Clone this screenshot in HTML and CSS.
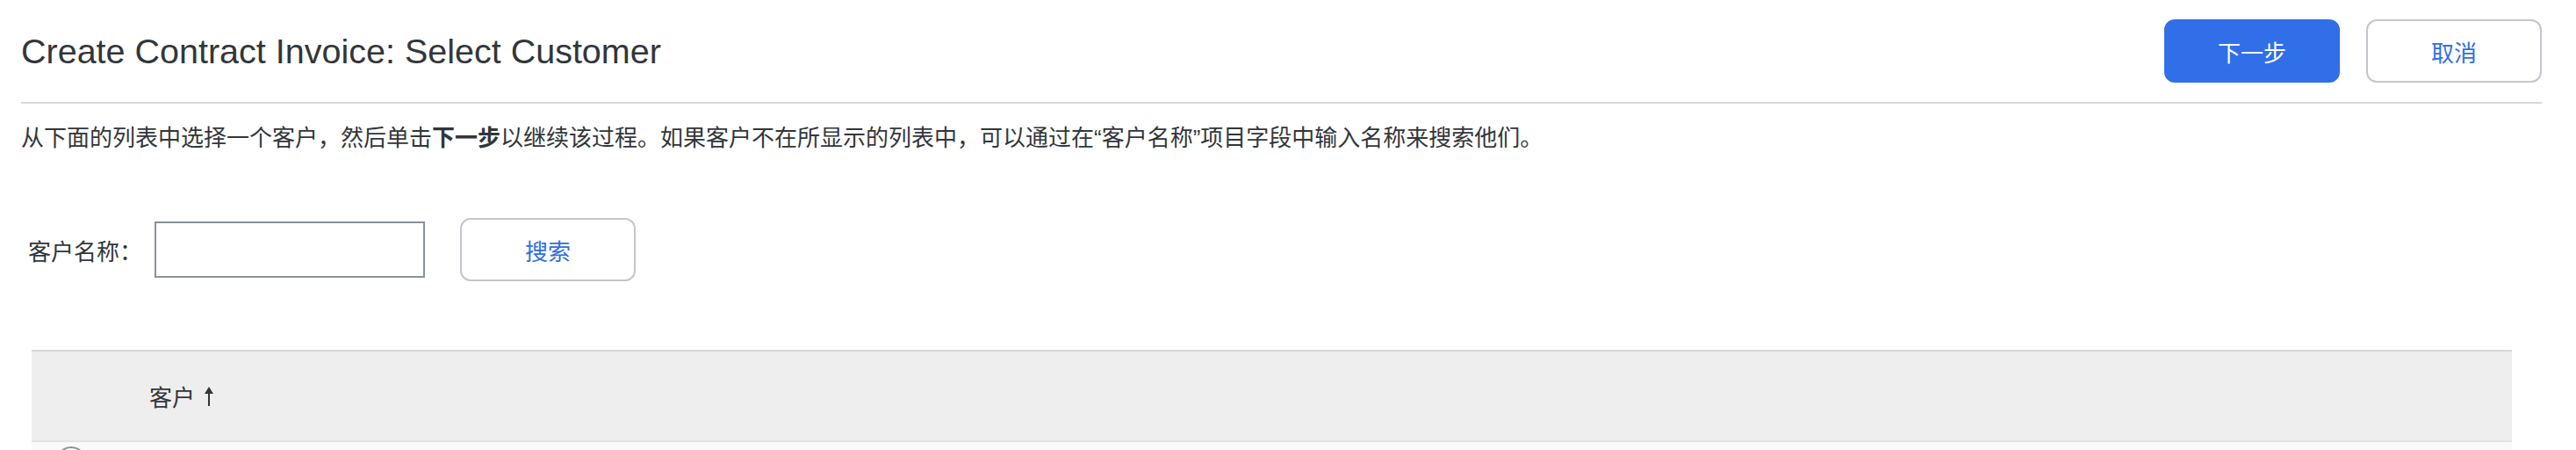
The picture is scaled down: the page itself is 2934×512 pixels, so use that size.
FILE: index.html
```html
<!DOCTYPE html>
<html lang="zh-CN">
<head>
    <meta charset="UTF-8">
    <title>Create Contract Invoice: Select Customer</title>
    <link rel="stylesheet" href="styles.css">
</head>
<body>
    <div class="page-head">
        <h1>Create Contract Invoice: Select Customer</h1>
        <div class="actions">
            <button class="btn btn-primary">下一步</button>
            <button class="btn">取消</button>
        </div>
    </div>

    <p class="intro">从下面的列表中选择一个客户，然后单击<b>下一步</b>以继续该过程。如果客户不在所显示的列表中，可以通过在“客户名称”项目字段中输入名称来搜索他们。</p>

    <div class="search-row">
        <label for="customerName">客户名称：</label>
        <input type="text" id="customerName">
        <button class="btn">搜索</button>
    </div>

    <div class="table">
        <div class="table-head">
            <span class="col-name">客户
                <svg class="sort-icon" width="12" height="24" viewBox="0 0 12 24">
                    <path d="M6 1 L11 9 L7 9 L7 23 L5 23 L5 9 L1 9 Z" fill="#32363a"/>
                </svg>
            </span>
        </div>
        <div class="table-row">
            <span class="radio"></span>
        </div>
    </div>
</body>
</html>
```

FILE: styles.css
```css
body { margin: 0; background: #fff; color: #32363a; font-family: "Liberation Sans", "Noto Sans CJK SC", sans-serif; overflow: hidden; }
.page-head { display: flex; align-items: center; justify-content: space-between; height: 116px; margin: 0 39px 0 24px; border-bottom: 2px solid #d9d9d9; }
h1 { margin: 0; font-size: 39.5px; font-weight: normal; color: #32363a; }
.actions { display: flex; gap: 30px; }
.btn { width: 200px; height: 72px; border: 2px solid #c2c6cc; border-radius: 12px; background: #fff; color: #2f6de6; font-family: "Noto Sans CJK SC", sans-serif; font-size: 26px; cursor: pointer; }
.btn-primary { background: #306fe8; border-color: #306fe8; color: #fff; }
.intro { margin: 21px 24px 0; font-size: 26px; line-height: 36px; }
.intro b { font-weight: bold; }
.search-row { display: flex; align-items: center; height: 72px; margin: 73px 0 0 32px; }
.search-row label { font-size: 26px; width: 144px; }
.search-row input { box-sizing: border-box; width: 308px; height: 64px; border: 2px solid #89919a; margin-right: 40px; padding: 0 10px; font-size: 26px; }
.table { margin: 78px 73px 0 36px; }
.table-head { display: flex; align-items: center; height: 101px; background: #eeeeee; border-top: 2px solid #d7d7d7; border-bottom: 2px solid #e3e3e3; }
.col-name { display: flex; align-items: center; gap: 10px; margin-left: 134px; font-size: 26px; }
.table-row { height: 60px; background: #fafafa; padding: 5px 0 0 28px; box-sizing: border-box; }
.radio { display: block; width: 30px; height: 30px; border: 2px solid #89919a; border-radius: 50%; background: #fff; }
```
